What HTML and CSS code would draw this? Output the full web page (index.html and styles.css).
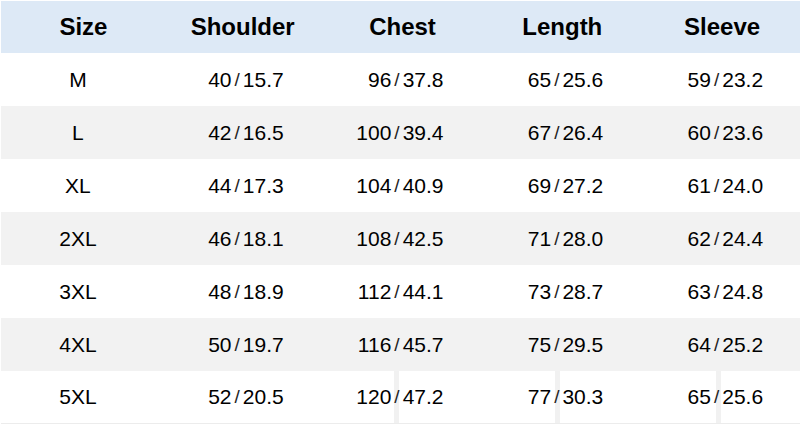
FILE: index.html
```html
<!DOCTYPE html>
<html>
<head>
<meta charset="utf-8">
<link rel="stylesheet" href="styles.css">
</head>
<body>
<div class="chart">
  <div class="row head">
    <div class="hcell first">Size</div>
    <div class="hcell">Shoulder</div>
    <div class="hcell">Chest</div>
    <div class="hcell">Length</div>
    <div class="hcell">Sleeve</div>
  </div>

  <div class="row">
    <div class="size">M</div>
    <div class="val"><span class="a">40</span><span class="s">/</span><span class="b">15.7</span></div>
    <div class="val"><span class="a">96</span><span class="s">/</span><span class="b">37.8</span></div>
    <div class="val"><span class="a">65</span><span class="s">/</span><span class="b">25.6</span></div>
    <div class="val"><span class="a">59</span><span class="s">/</span><span class="b">23.2</span></div>
  </div>

  <div class="row alt">
    <div class="size">L</div>
    <div class="val"><span class="a">42</span><span class="s">/</span><span class="b">16.5</span></div>
    <div class="val"><span class="a">100</span><span class="s">/</span><span class="b">39.4</span></div>
    <div class="val"><span class="a">67</span><span class="s">/</span><span class="b">26.4</span></div>
    <div class="val"><span class="a">60</span><span class="s">/</span><span class="b">23.6</span></div>
  </div>

  <div class="row">
    <div class="size">XL</div>
    <div class="val"><span class="a">44</span><span class="s">/</span><span class="b">17.3</span></div>
    <div class="val"><span class="a">104</span><span class="s">/</span><span class="b">40.9</span></div>
    <div class="val"><span class="a">69</span><span class="s">/</span><span class="b">27.2</span></div>
    <div class="val"><span class="a">61</span><span class="s">/</span><span class="b">24.0</span></div>
  </div>

  <div class="row alt">
    <div class="size">2XL</div>
    <div class="val"><span class="a">46</span><span class="s">/</span><span class="b">18.1</span></div>
    <div class="val"><span class="a">108</span><span class="s">/</span><span class="b">42.5</span></div>
    <div class="val"><span class="a">71</span><span class="s">/</span><span class="b">28.0</span></div>
    <div class="val"><span class="a">62</span><span class="s">/</span><span class="b">24.4</span></div>
  </div>

  <div class="row">
    <div class="size">3XL</div>
    <div class="val"><span class="a">48</span><span class="s">/</span><span class="b">18.9</span></div>
    <div class="val"><span class="a">112</span><span class="s">/</span><span class="b">44.1</span></div>
    <div class="val"><span class="a">73</span><span class="s">/</span><span class="b">28.7</span></div>
    <div class="val"><span class="a">63</span><span class="s">/</span><span class="b">24.8</span></div>
  </div>

  <div class="row alt">
    <div class="size">4XL</div>
    <div class="val"><span class="a">50</span><span class="s">/</span><span class="b">19.7</span></div>
    <div class="val"><span class="a">116</span><span class="s">/</span><span class="b">45.7</span></div>
    <div class="val"><span class="a">75</span><span class="s">/</span><span class="b">29.5</span></div>
    <div class="val"><span class="a">64</span><span class="s">/</span><span class="b">25.2</span></div>
  </div>

  <div class="row last">
    <div class="size">5XL</div>
    <div class="val"><span class="a">52</span><span class="s">/</span><span class="b">20.5</span></div>
    <div class="val"><span class="a">120</span><span class="s">/</span><span class="b">47.2</span></div>
    <div class="val"><span class="a">77</span><span class="s">/</span><span class="b">30.3</span></div>
    <div class="val"><span class="a">65</span><span class="s">/</span><span class="b">25.6</span></div>
  </div>
</div>
</body>
</html>
```

FILE: styles.css
```css
html, body {
  margin: 0;
  padding: 0;
  background: #ffffff;
}

body {
  padding: 1px 0 0 1px;
  font-family: "Liberation Sans", Arial, sans-serif;
  color: #000000;
}

.chart {
  width: 799px;
}

.row {
  display: grid;
  grid-template-columns: repeat(5, 1fr);
  height: 53px;
  align-items: center;
  background: #ffffff;
}

.row.alt {
  background: #f2f2f2;
}

.row.head {
  height: 52px;
  background: #dde9f6;
}

.row.last {
  height: 52px;
  border-bottom: 1px solid #ececec;
  background-color: #ffffff;
  background-image: linear-gradient(to right,
    transparent 393px, #f1f1f1 393px, #f1f1f1 398px, transparent 398px,
    transparent 554px, #f1f1f1 554px, #f1f1f1 559px, transparent 559px,
    transparent 715px, #f1f1f1 715px, #f1f1f1 720px, transparent 720px);
}

.hcell {
  text-align: center;
  font-size: 24px;
  font-weight: bold;
  padding-left: 4px;
}

.hcell.first {
  padding-left: 5px;
}

.size {
  text-align: center;
  font-size: 21px;
  padding-right: 6px;
}

.val {
  display: grid;
  grid-template-columns: 1fr auto 1fr;
  align-items: center;
  font-size: 21px;
  padding-right: 7px;
}

.val .a {
  text-align: right;
}

.val .b {
  text-align: left;
}

.val .s {
  margin: 0 3px;
  font-size: 19px;
  color: #222222;
}
```
